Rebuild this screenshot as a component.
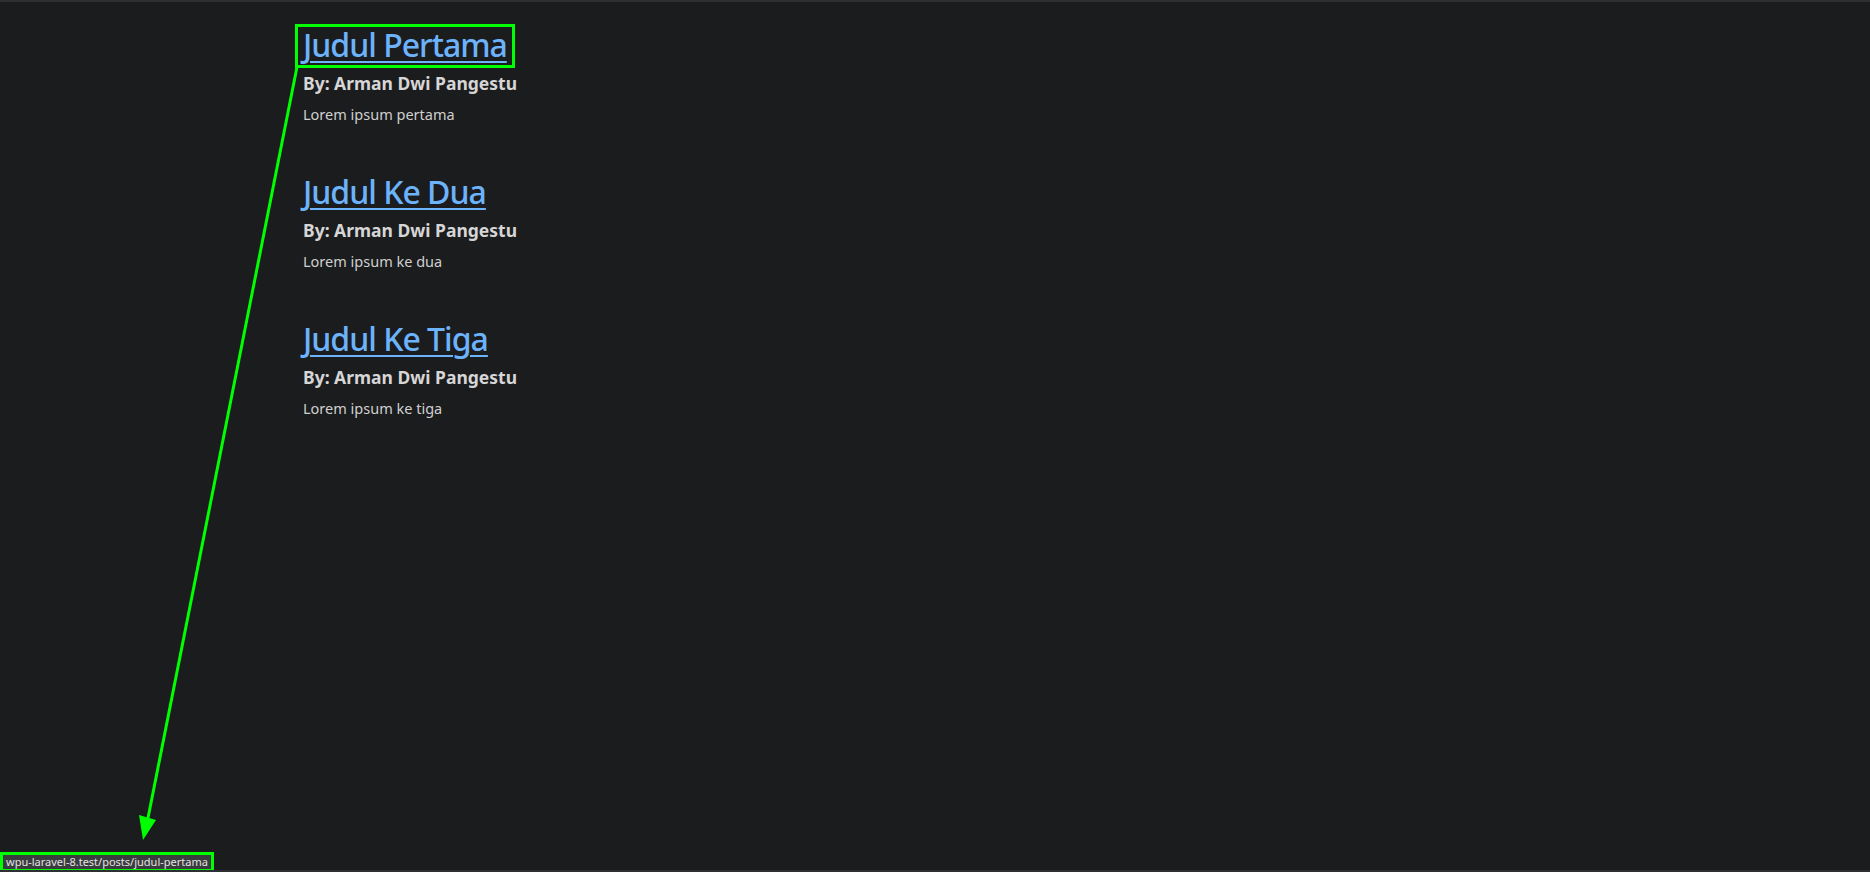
import React from "react";

const posts = [
  { title: "Judul Pertama", author: "Arman Dwi Pangestu", body: "Lorem ipsum pertama" },
  { title: "Judul Ke Dua", author: "Arman Dwi Pangestu", body: "Lorem ipsum ke dua" },
  { title: "Judul Ke Tiga", author: "Arman Dwi Pangestu", body: "Lorem ipsum ke tiga" },
];

export default function App() {
  return (
    <div className="relative h-[872px] w-[1870px] overflow-hidden bg-[#1b1c1e] font-['Noto_Sans',sans-serif]">
      <div className="h-[2px] bg-[#2e2f32]" />
      <div className="pl-[303px] pt-[24px]">
        {posts.map((p, i) => (
          <article key={i} className="mb-[48px]">
            <h2 className="text-[32px] font-medium leading-[38px] tracking-[-1px] text-[#6db3fb]">
              <a href="#" className="underline decoration-2 underline-offset-[4px]">
                {p.title}
              </a>
            </h2>
            <h5 className="mt-[7px] text-[17.5px] font-bold leading-[24px] text-[#d6d6d6]">By: {p.author}</h5>
            <p className="mt-[8px] text-[14.5px] leading-[22px] text-[#cfcfcf]">{p.body}</p>
          </article>
        ))}
      </div>

      {/* status bar overlay */}
      <div className="absolute bottom-0 left-0 border-[3px] border-[#00ff00] bg-[#3a3b3e]">
        <div className="px-[3px] text-[11px] leading-[14px] text-[#e2e2e2]">wpu-laravel-8.test/posts/judul-pertama</div>
      </div>

      {/* annotation box */}
      <div className="absolute left-[295px] top-[24px] h-[44px] w-[220px] border-[3px] border-[#00ff00]" />

      {/* arrow */}
      <svg className="absolute left-0 top-0" width="1870" height="872">
        <line x1="297" y1="67" x2="148" y2="818" stroke="#00ff00" strokeWidth="3" />
        <polygon points="143,840 139,815 156,820" fill="#00ff00" />
      </svg>
      <div className="absolute bottom-0 left-0 right-0 h-[2px] bg-[#2e2f32]" />
    </div>
  );
}
